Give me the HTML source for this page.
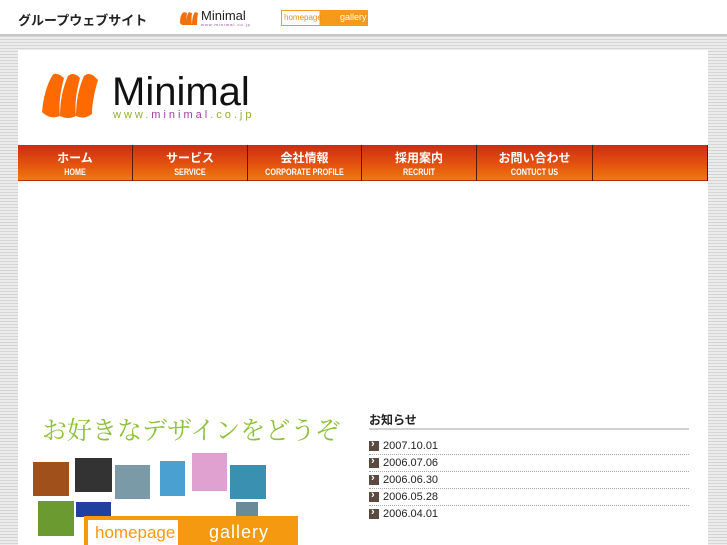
<!DOCTYPE html>
<html><head><meta charset="utf-8"><style>
*{margin:0;padding:0;box-sizing:border-box}
body{width:727px;height:545px;overflow:hidden;font-family:"Liberation Sans","Noto Sans CJK JP",sans-serif;background:repeating-linear-gradient(#d4d4d4 0,#d4d4d4 1px,#ececec 1px,#ececec 3px);position:relative}
.top{position:absolute;left:0;top:0;width:727px;height:36px;background:#fff;border-bottom:2px solid #c8c8c8}
.abs{position:absolute}
.panel{position:absolute;left:18px;top:50px;width:690px;height:495px;background:#fff}
.nav{position:absolute;left:18px;top:145px;width:690px;height:36px;background:linear-gradient(#cf2a15,#e5560f 60%,#ee7a10);border-bottom:1px solid #b03010}
.nav div{position:absolute;top:0;height:36px;border-right:1px solid #5a1a08;color:#fff;text-align:center}
.nav b{display:block;font-size:12px;margin-top:6px;line-height:14px}
.nav small{display:block;font-size:9px;margin-top:2px;font-weight:bold;transform:scaleX(.8)}
.news{position:absolute;left:369px;width:320px;font-size:11px;color:#222;border-bottom:1px dotted #aaa;height:17px;line-height:16px;padding-left:14px}
.news:before{content:"";position:absolute;left:0;top:3px;width:10px;height:10px;background:#5a4a40}
.news:after{content:"›";position:absolute;left:2px;top:-2px;color:#fff;font-size:11px;font-weight:bold}
</style></head><body>
<div class="top">
<div class="abs" style="left:18px;top:10px;font-size:13px;font-weight:bold;color:#222">グループウェブサイト</div>
<svg class="abs" style="left:178px;top:10px" width="22" height="16"><path d="M2 13 Q2 4 6 2 L9 3 Q8 10 8 15 L4 15Z M8 15 Q8 6 11 2 L14 3 Q13 10 14 15Z M14 15 Q14 6 17 2 L20 3 Q19 10 19 15Z" fill="#f07010"/></svg>
<div class="abs" style="left:201px;top:8px;font-size:13px;color:#222">Minimal</div>
<div class="abs" style="left:201px;top:22px;font-size:4px;color:#a040a0;letter-spacing:1px">www.minimal.co.jp</div>
<div class="abs" style="left:281px;top:10px;width:87px;height:16px;border:1px solid #f39a20;background:linear-gradient(90deg,#fff 0,#fff 44%,#f59a1a 44%)"></div>
<div class="abs" style="left:284px;top:13px;font-size:8px;color:#f08a10">homepage</div>
<div class="abs" style="left:340px;top:12px;font-size:9px;color:#fff">gallery</div>
</div>
<div class="panel"></div>
<svg class="abs" style="left:40px;top:70px" width="62" height="50"><path d="M2 42 Q4 20 12 6 Q14 2 20 5 L24 8 Q18 30 20 46 Q10 50 2 42Z M20 46 Q20 24 28 6 Q32 2 38 6 L40 8 Q34 30 36 46 Q28 50 20 46Z M36 46 Q36 24 44 6 Q48 2 54 6 L58 10 Q52 30 52 44 Q44 50 36 46Z" fill="#ff6a00"/></svg>
<div class="abs" style="left:112px;top:70px;font-size:40px;color:#111;line-height:44px">Minimal</div>
<div class="abs" style="left:113px;top:109px;font-size:11px;letter-spacing:3px;color:#a040a0"><span style="color:#90b030">www.</span>minimal<span style="color:#90b030">.co.jp</span></div>
<div class="nav">
<div style="left:0;width:115px"><b>ホーム</b><small>HOME</small></div>
<div style="left:115px;width:115px"><b>サービス</b><small>SERVICE</small></div>
<div style="left:230px;width:114px"><b>会社情報</b><small>CORPORATE PROFILE</small></div>
<div style="left:344px;width:115px"><b>採用案内</b><small>RECRUIT</small></div>
<div style="left:459px;width:116px"><b>お問い合わせ</b><small>CONTUCT US</small></div>
<div style="left:575px;width:115px"></div>
</div>
<div class="abs" style="left:42px;top:411px;font-size:25px;color:#8cc03a;font-family:'Noto Serif CJK SC',serif">お好きなデザインをどうぞ</div>
<div class="abs" style="left:33px;top:462px;width:36px;height:34px;background:#a0501a"></div>
<div class="abs" style="left:75px;top:458px;width:37px;height:34px;background:#333"></div>
<div class="abs" style="left:115px;top:465px;width:35px;height:34px;background:#7a9aa8"></div>
<div class="abs" style="left:160px;top:461px;width:25px;height:35px;background:#4aa0d0"></div>
<div class="abs" style="left:192px;top:453px;width:35px;height:38px;background:#e0a0d0"></div>
<div class="abs" style="left:230px;top:465px;width:36px;height:34px;background:#3a90b0"></div>
<div class="abs" style="left:38px;top:501px;width:36px;height:35px;background:#6a9a30"></div>
<div class="abs" style="left:76px;top:502px;width:35px;height:15px;background:#2040a0"></div>
<div class="abs" style="left:236px;top:502px;width:22px;height:38px;background:#6a8a98"></div>
<div class="abs" style="left:84px;top:516px;width:214px;height:29px;background:#f59a10"></div>
<div class="abs" style="left:88px;top:520px;width:90px;height:25px;background:#fff"></div>
<div class="abs" style="left:95px;top:523px;font-size:17px;color:#f59a10">homepage</div>
<div class="abs" style="left:209px;top:522px;font-size:18px;color:#fff;letter-spacing:1px">gallery</div>
<div class="abs" style="left:369px;top:411px;font-size:12px;font-weight:bold;color:#222">お知らせ</div>
<div class="abs" style="left:369px;top:428px;width:320px;border-top:2px solid #d0d0d0"></div>
<div class="news" style="top:438px">2007.10.01</div>
<div class="news" style="top:455px">2006.07.06</div>
<div class="news" style="top:472px">2006.06.30</div>
<div class="news" style="top:489px">2006.05.28</div>
<div class="news" style="top:506px;border-bottom:none">2006.04.01</div>
</body></html>
